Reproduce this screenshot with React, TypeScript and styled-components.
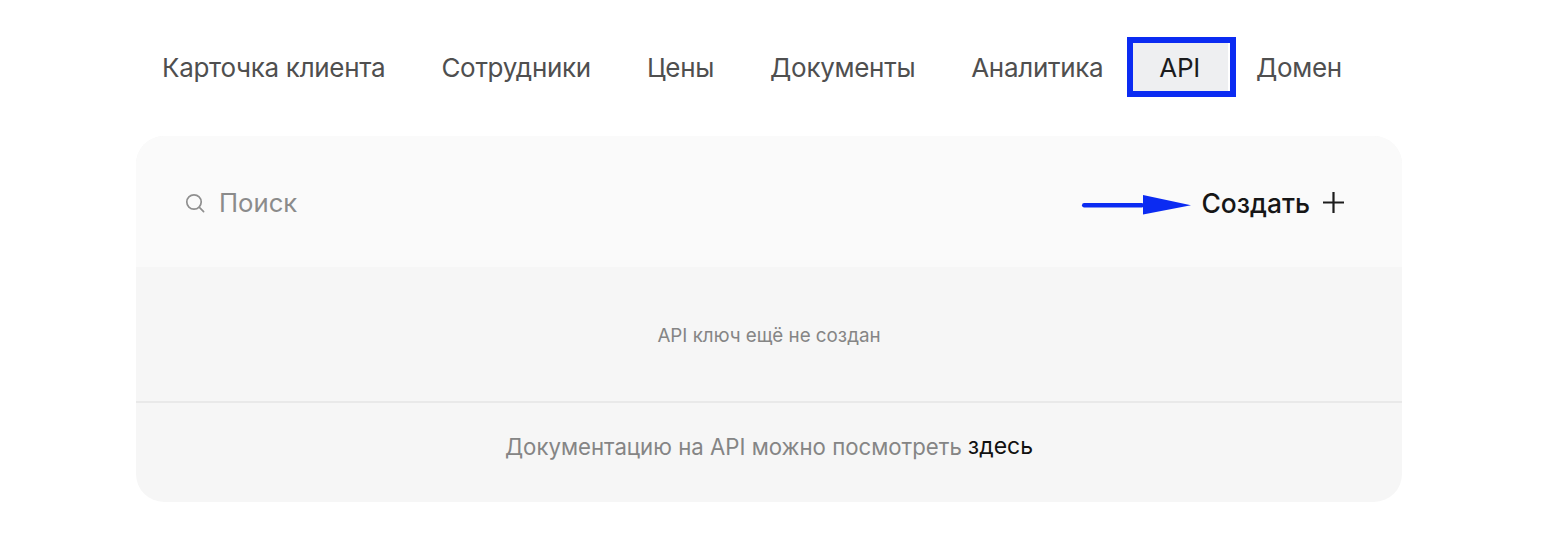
import styled, { createGlobalStyle } from 'styled-components';

const GlobalStyle = createGlobalStyle`
  html, body {
    margin: 0;
    padding: 0;
    background: #ffffff;
    font-family: Inter, "Liberation Sans", sans-serif;
  }
`;

const Page = styled.div`
  width: 1542px;
  height: 535px;
  box-sizing: border-box;
  padding: 43px 140px 0 136px;
  overflow: hidden;
`;

const TabList = styled.nav`
  display: flex;
  height: 48px;
  margin: 0 0 45px -2px;
`;

const Tab = styled.div<{ $active?: boolean }>`
  position: relative;
  display: flex;
  align-items: center;
  padding: 0 28px;
  font-size: 26px;
  letter-spacing: -0.3px;
  white-space: nowrap;
  color: ${({ $active }) => ($active ? '#1b1b1d' : '#4f4f4f')};
  background: ${({ $active }) => ($active ? '#eeeff1' : 'transparent')};

  ${({ $active }) =>
    $active &&
    `
    &::after {
      content: '';
      position: absolute;
      inset: -6px -8px -6px -4px;
      border: 6px solid #0b2bf2;
    }
  `}
`;

const Panel = styled.section`
  width: 1266px;
  height: 366px;
  border-radius: 28px;
  overflow: hidden;
  background: #f6f6f6;
  display: flex;
  flex-direction: column;
`;

const Toolbar = styled.div`
  position: relative;
  height: 131px;
  flex: none;
  box-sizing: border-box;
  padding: 2px 57px 0 49px;
  background: #fafafa;
  display: flex;
  align-items: center;
  justify-content: space-between;
`;

const Search = styled.div`
  display: flex;
  align-items: center;
  gap: 14px;
  font-size: 25.7px;
  color: #8b8b8b;
`;

const CreateButton = styled.div`
  display: flex;
  align-items: center;
  gap: 12px;
  font-size: 26.4px;
  font-weight: 500;
  color: #161616;
`;

const Arrow = styled.svg`
  position: absolute;
  left: 945px;
  top: 57px;
`;

const EmptyState = styled.div`
  height: 136px;
  flex: none;
  box-sizing: border-box;
  padding-top: 2px;
  display: flex;
  align-items: center;
  justify-content: center;
  font-size: 18.8px;
  color: #858585;
  border-bottom: 2px solid #e9e9e9;
`;

const Footer = styled.div`
  flex: 1;
  padding-bottom: 13px;
  display: flex;
  align-items: center;
  justify-content: center;
  font-size: 22.2px;
  color: #858585;
`;

const DocsLink = styled.span`
  color: #111111;
  font-size: 23px;
  margin-left: 6px;
`;

const tabs = ['Карточка клиента', 'Сотрудники', 'Цены', 'Документы', 'Аналитика', 'API', 'Домен'];

export default function App() {
  return (
    <>
      <GlobalStyle />
      <Page>
        <TabList>
          {tabs.map((name) => (
            <Tab key={name} $active={name === 'API'}>
              {name}
            </Tab>
          ))}
        </TabList>
        <Panel>
          <Toolbar>
            <Search>
              <svg width="20" height="20" viewBox="0 0 20 20" fill="none" stroke="#8f8f8f" strokeWidth="1.7" strokeLinecap="round">
                <circle cx="9" cy="9" r="7.2" />
                <path d="M14.4 14.4 L18.6 18.6" />
              </svg>
              Поиск
            </Search>
            <CreateButton>
              Создать
              <svg width="23" height="23" viewBox="0 0 23 23" fill="none" stroke="#1c1c1c" strokeWidth="2.2">
                <path d="M11.5 1 V22 M1 11.5 H22" />
              </svg>
            </CreateButton>
            <Arrow width="110" height="24" viewBox="0 0 110 24" fill="#0b2bf2">
              <rect x="1" y="10" width="62" height="4.5" rx="2.2" />
              <path d="M62 2 L110 12.3 L62 21.5 Z" />
            </Arrow>
          </Toolbar>
          <EmptyState>API ключ ещё не создан</EmptyState>
          <Footer>
            Документацию на API можно посмотреть<DocsLink>здесь</DocsLink>
          </Footer>
        </Panel>
      </Page>
    </>
  );
}
